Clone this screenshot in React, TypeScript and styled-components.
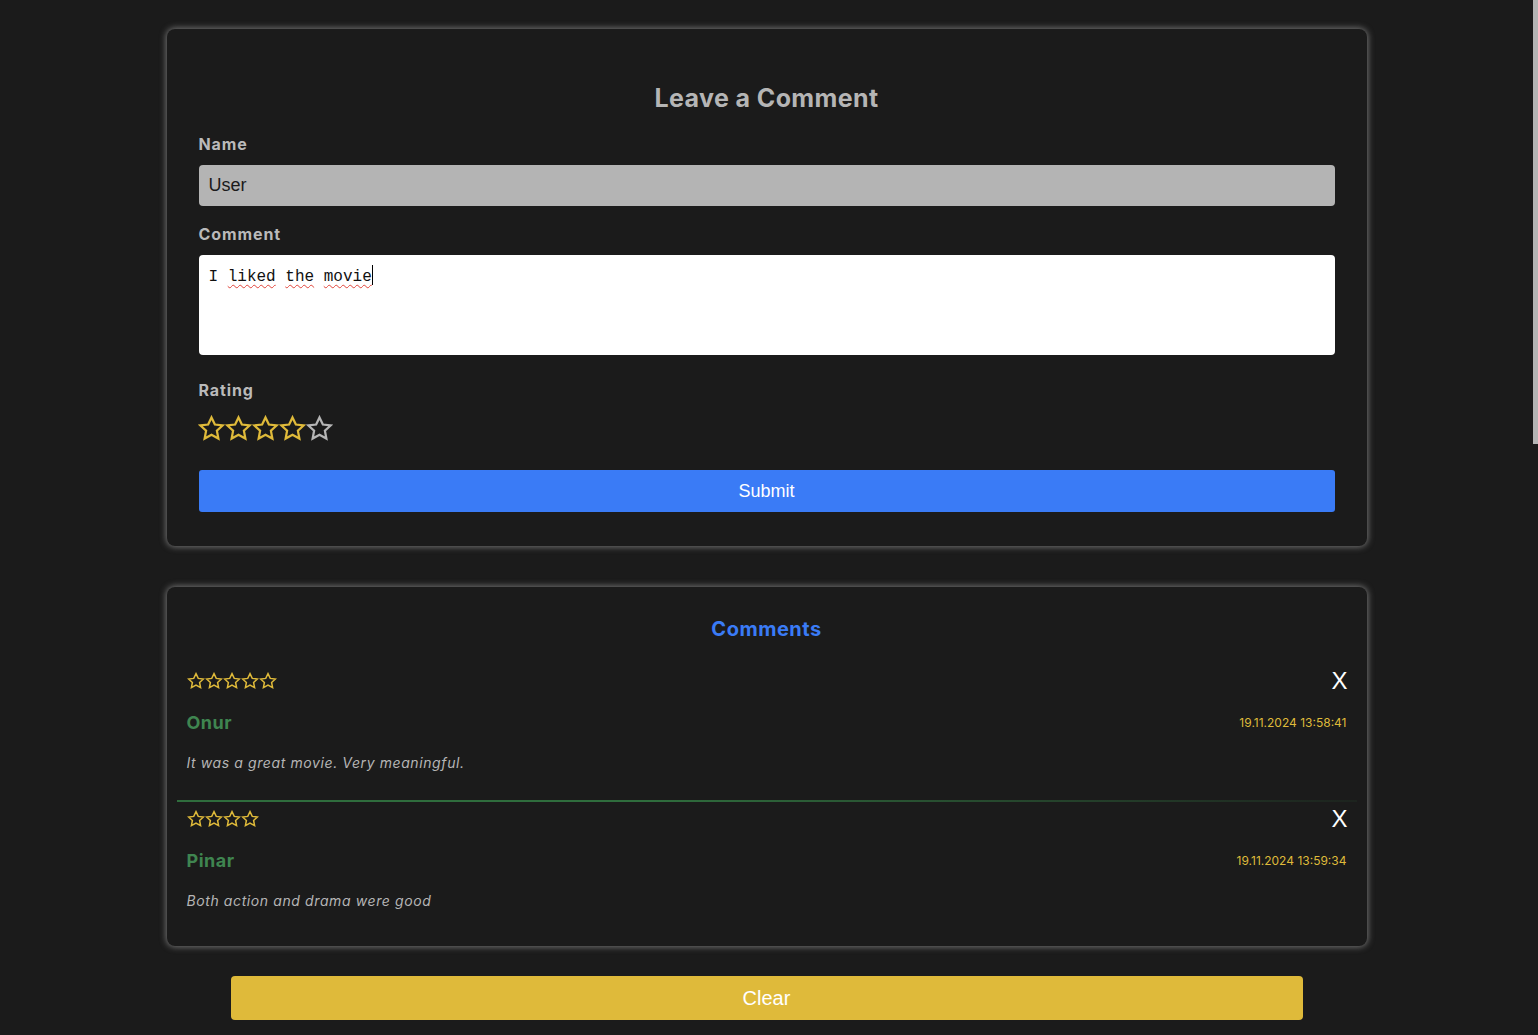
import React from "react";
import styled, { createGlobalStyle } from "styled-components";

const GlobalStyle = createGlobalStyle`
  html, body {
    margin: 0;
    background: #1b1b1b;
  }
  body {
    font-family: "Inter", "Open Sans", sans-serif;
  }
`;

const GOLD = "#dfba3a";
const GREY = "#b5b5b5";

interface CommentItem {
  name: string;
  text: string;
  date: string;
  rating: number;
}

const comments: CommentItem[] = [
  {
    name: "Onur",
    text: "It was a great movie. Very meaningful.",
    date: "19.11.2024 13:58:41",
    rating: 5,
  },
  {
    name: "Pinar",
    text: "Both action and drama were good",
    date: "19.11.2024 13:59:34",
    rating: 4,
  },
];

const StarIcon: React.FC<{ size: number; color: string }> = ({ size, color }) => (
  <svg width={size} height={size} viewBox="0 0 24 24">
    <polygon
      points="12,2.2 15,8.5 21.9,9.3 16.8,14 18.1,20.9 12,17.5 5.9,20.9 7.2,14 2.1,9.3 9,8.5"
      fill="none"
      stroke={color}
      strokeWidth="2"
      strokeLinejoin="miter"
    />
  </svg>
);

export default function App() {
  return (
    <>
      <GlobalStyle />
      <Page>
        <Card>
          <FormTitle>Leave a Comment</FormTitle>
          <Label>Name</Label>
          <NameInput>User</NameInput>
          <Label $top={18}>Comment</Label>
          <TextArea>
            <span>I </span>
            <Misspelled>liked</Misspelled> <Misspelled>the</Misspelled>{" "}
            <Misspelled>movie</Misspelled>
            <Caret />
          </TextArea>
          <Label $top={25}>Rating</Label>
          <StarRow>
            {[1, 2, 3, 4, 5].map((n) => (
              <StarIcon key={n} size={27} color={n <= 4 ? GOLD : GREY} />
            ))}
          </StarRow>
          <SubmitButton>Submit</SubmitButton>
        </Card>

        <ListCard>
          <ListTitle>Comments</ListTitle>
          {comments.map((c, i) => (
            <Item key={c.name} $last={i === comments.length - 1}>
              <TopRow>
                <SmallStars>
                  {Array.from({ length: c.rating }).map((_, k) => (
                    <StarIcon key={k} size={18} color={GOLD} />
                  ))}
                </SmallStars>
                <RemoveButton>X</RemoveButton>
              </TopRow>
              <NameRow>
                <Author>{c.name}</Author>
                <DateText>{c.date}</DateText>
              </NameRow>
              <Body>{c.text}</Body>
            </Item>
          ))}
        </ListCard>

        <ClearButton>Clear</ClearButton>
      </Page>
      <ScrollThumb />
    </>
  );
}

const Page = styled.div`
  box-sizing: border-box;
  width: 1533px;
  display: flex;
  flex-direction: column;
  align-items: center;
  padding: 29px 0 15px;
`;

const ScrollThumb = styled.div`
  position: fixed;
  top: 0;
  right: 0;
  width: 5px;
  height: 444px;
  background: #b4b4b4;
`;

const Card = styled.div`
  box-sizing: border-box;
  width: 1200px;
  padding: 32px 32px 34px;
  background: #1b1b1b;
  border-radius: 8px;
  box-shadow: 0 0 6px 1px rgba(190, 190, 190, 0.55);
  display: flex;
  flex-direction: column;
`;

const FormTitle = styled.h2`
  margin: 22px 0 21px;
  text-align: center;
  font-size: 25px;
  line-height: 30px;
  font-weight: 700;
  letter-spacing: 0.4px;
  color: ${GREY};
`;

const Label = styled.div<{ $top?: number }>`
  margin: ${(p) => p.$top ?? 0}px 0 11px;
  font-size: 16px;
  line-height: 20px;
  font-weight: 700;
  letter-spacing: 0.9px;
  color: #bababa;
`;

const NameInput = styled.div`
  height: 41px;
  box-sizing: border-box;
  padding: 0 10px;
  display: flex;
  align-items: center;
  background: #b4b4b4;
  border-radius: 4px;
  font-family: "Liberation Sans", Arial, sans-serif;
  font-size: 18px;
  color: #1b1b1b;
`;

const TextArea = styled.div`
  height: 100px;
  box-sizing: border-box;
  padding: 10px 10px;
  background: #ffffff;
  border-radius: 4px;
  font-family: "Liberation Mono", "DejaVu Sans Mono", monospace;
  font-size: 16px;
  line-height: 20px;
  color: #111;
  white-space: pre;
`;

const Misspelled = styled.span`
  text-decoration: underline wavy #e0443a;
  text-decoration-thickness: 1px;
  text-underline-offset: 3px;
`;

const Caret = styled.span`
  display: inline-block;
  width: 1px;
  height: 20px;
  vertical-align: -4px;
  background: #000;
`;

const StarRow = styled.div`
  display: flex;
  margin: 4px 0 0 -1px;
`;

const SubmitButton = styled.button`
  margin-top: 28px;
  height: 42px;
  border: none;
  border-radius: 3px;
  background: #3a7bf6;
  color: #fff;
  font-family: "Liberation Sans", Arial, sans-serif;
  font-size: 18px;
`;

const ListCard = styled(Card)`
  margin-top: 41px;
  padding: 29px 10px 6px;
`;

const ListTitle = styled.h3`
  margin: 0 0 22px;
  text-align: center;
  font-size: 20px;
  line-height: 26px;
  font-weight: 700;
  letter-spacing: 0.5px;
  color: #3a7bf6;
`;

const Item = styled.div<{ $last: boolean }>`
  padding: 8px 10px 27px;
  border-bottom: 2px solid transparent;
  border-image: ${(p) =>
    p.$last ? "none" : "linear-gradient(to right, #2f6d3d, #2f6d3d 40%, rgba(47,109,61,0.1)) 1"};
`;

const TopRow = styled.div`
  display: flex;
  justify-content: space-between;
  align-items: center;
  height: 18px;
`;

const SmallStars = styled.div`
  display: flex;
`;

const RemoveButton = styled.span`
  font-family: "Liberation Sans", Arial, sans-serif;
  font-size: 24px;
  line-height: 18px;
  color: #fff;
  margin-right: -1px;
`;

const NameRow = styled.div`
  display: flex;
  justify-content: space-between;
  align-items: center;
  margin-top: 19px;
  height: 26px;
`;

const Author = styled.span`
  font-size: 18px;
  font-weight: 700;
  letter-spacing: 0.5px;
  color: #3f8550;
`;

const DateText = styled.span`
  font-size: 12px;
  color: ${GOLD};
`;

const Body = styled.p`
  margin: 18px 0 0;
  font-size: 14px;
  line-height: 20px;
  font-style: italic;
  letter-spacing: 0.6px;
  color: ${GREY};
`;

const ClearButton = styled.button`
  margin-top: 30px;
  width: 1072px;
  height: 44px;
  border: none;
  border-radius: 4px;
  background: ${GOLD};
  color: #fff;
  font-family: "Liberation Sans", Arial, sans-serif;
  font-size: 20px;
`;
